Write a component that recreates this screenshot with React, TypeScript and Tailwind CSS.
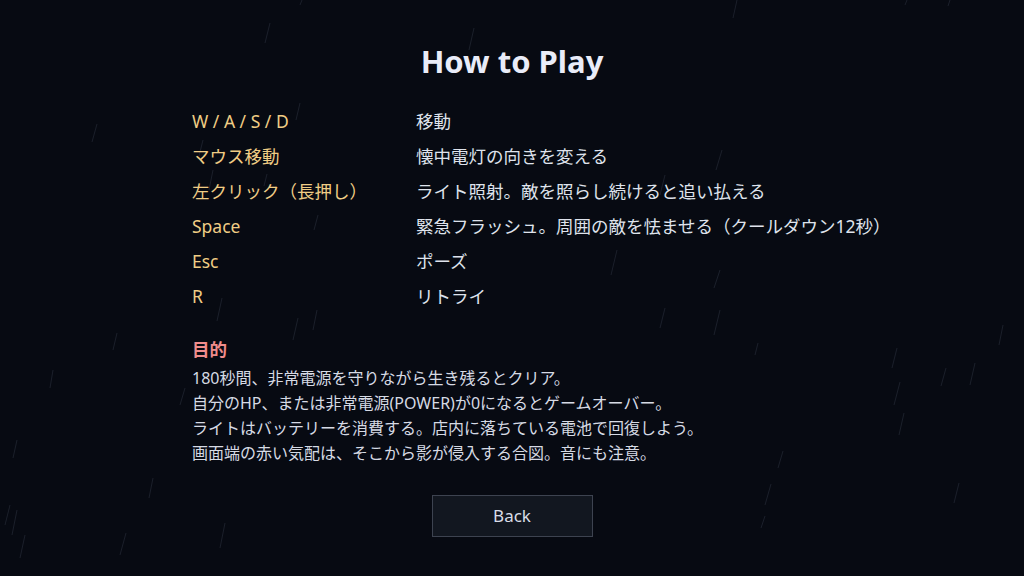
import React from "react";

// faint rain streaks behind the menu: [x1, y1, x2, y2]
const rain: [number, number, number, number][] = [
  [270, 23, 265, 43], [302, 0, 300, 5], [97, 124, 92, 142], [300, 103, 296, 120],
  [203, 140, 199, 156], [213, 170, 209, 190], [267, 174, 264, 186], [318, 215, 314, 230],
  [474, 28, 469, 50], [737, 0, 733, 18], [907, 0, 905, 5], [722, 150, 716, 170],
  [665, 175, 660, 195], [617, 250, 611, 275], [720, 270, 714, 288],
  [222, 298, 217, 321], [298, 318, 293, 340], [317, 310, 313, 330], [117, 333, 113, 350],
  [53, 370, 50, 388], [185, 388, 180, 405], [17, 440, 13, 458], [153, 478, 149, 498],
  [10, 505, 5, 525], [17, 510, 12, 535], [25, 535, 20, 558], [126, 533, 120, 555],
  [225, 523, 220, 548], [665, 308, 660, 328], [720, 310, 714, 335], [758, 343, 755, 355],
  [897, 348, 892, 368], [900, 382, 894, 405], [904, 413, 899, 435], [946, 368, 941, 386],
  [975, 363, 970, 385], [1003, 325, 999, 345], [783, 451, 778, 468], [771, 484, 765, 505],
  [765, 516, 761, 528], [959, 483, 954, 503], [1124, 0, 1120, 8], [950, 0, 948, 6],
];

const controls = [
  ["W / A / S / D", "移動"],
  ["マウス移動", "懐中電灯の向きを変える"],
  ["左クリック（長押し）", "ライト照射。敵を照らし続けると追い払える"],
  ["Space", "緊急フラッシュ。周囲の敵を怯ませる（クールダウン12秒）"],
  ["Esc", "ポーズ"],
  ["R", "リトライ"],
];

const goals = [
  "180秒間、非常電源を守りながら生き残るとクリア。",
  "自分のHP、または非常電源(POWER)が0になるとゲームオーバー。",
  "ライトはバッテリーを消費する。店内に落ちている電池で回復しよう。",
  "画面端の赤い気配は、そこから影が侵入する合図。音にも注意。",
];

export default function App() {
  return (
    <div
      className="relative h-[576px] w-full overflow-hidden bg-[#070a12]"
      style={{ fontFamily: '"Noto Sans", "Noto Sans CJK JP", sans-serif' }}
    >
      <svg className="absolute inset-0 h-full w-full" viewBox="0 0 1024 576">
        {rain.map(([x1, y1, x2, y2], i) => (
          <line key={i} x1={x1} y1={y1} x2={x2} y2={y2} stroke="#8a9bb8" strokeOpacity="0.15" strokeWidth="1" />
        ))}
      </svg>

      <div className="relative mx-auto w-[640px] pt-[43px]">
        <h1 className="text-center text-[31px] leading-[36px] font-bold text-[#e9ecf8]">How to Play</h1>

        <div className="mt-[25px]">
          {controls.map(([key, desc]) => (
            <div key={key} className="flex h-[35px] items-center whitespace-nowrap text-[17.5px]">
              <span className="w-[224px] shrink-0 text-[#f0cd85]">{key}</span>
              <span className="text-[#dfe3ec]">{desc}</span>
            </div>
          ))}
        </div>

        <h2 className="mt-[23px] text-[17.5px] leading-[24px] font-bold text-[#f08c8c]">目的</h2>
        <div className="mt-[5px] whitespace-nowrap text-[16px] leading-[25px] text-[#d6dae4]">
          {goals.map((g) => (
            <p key={g}>{g}</p>
          ))}
        </div>

        <div className="mt-[29px] flex justify-center">
          <button className="h-[42px] w-[161px] border border-[#3d4350] bg-[#121720] text-[17px] text-[#d9dde8]">
            Back
          </button>
        </div>
      </div>
    </div>
  );
}
